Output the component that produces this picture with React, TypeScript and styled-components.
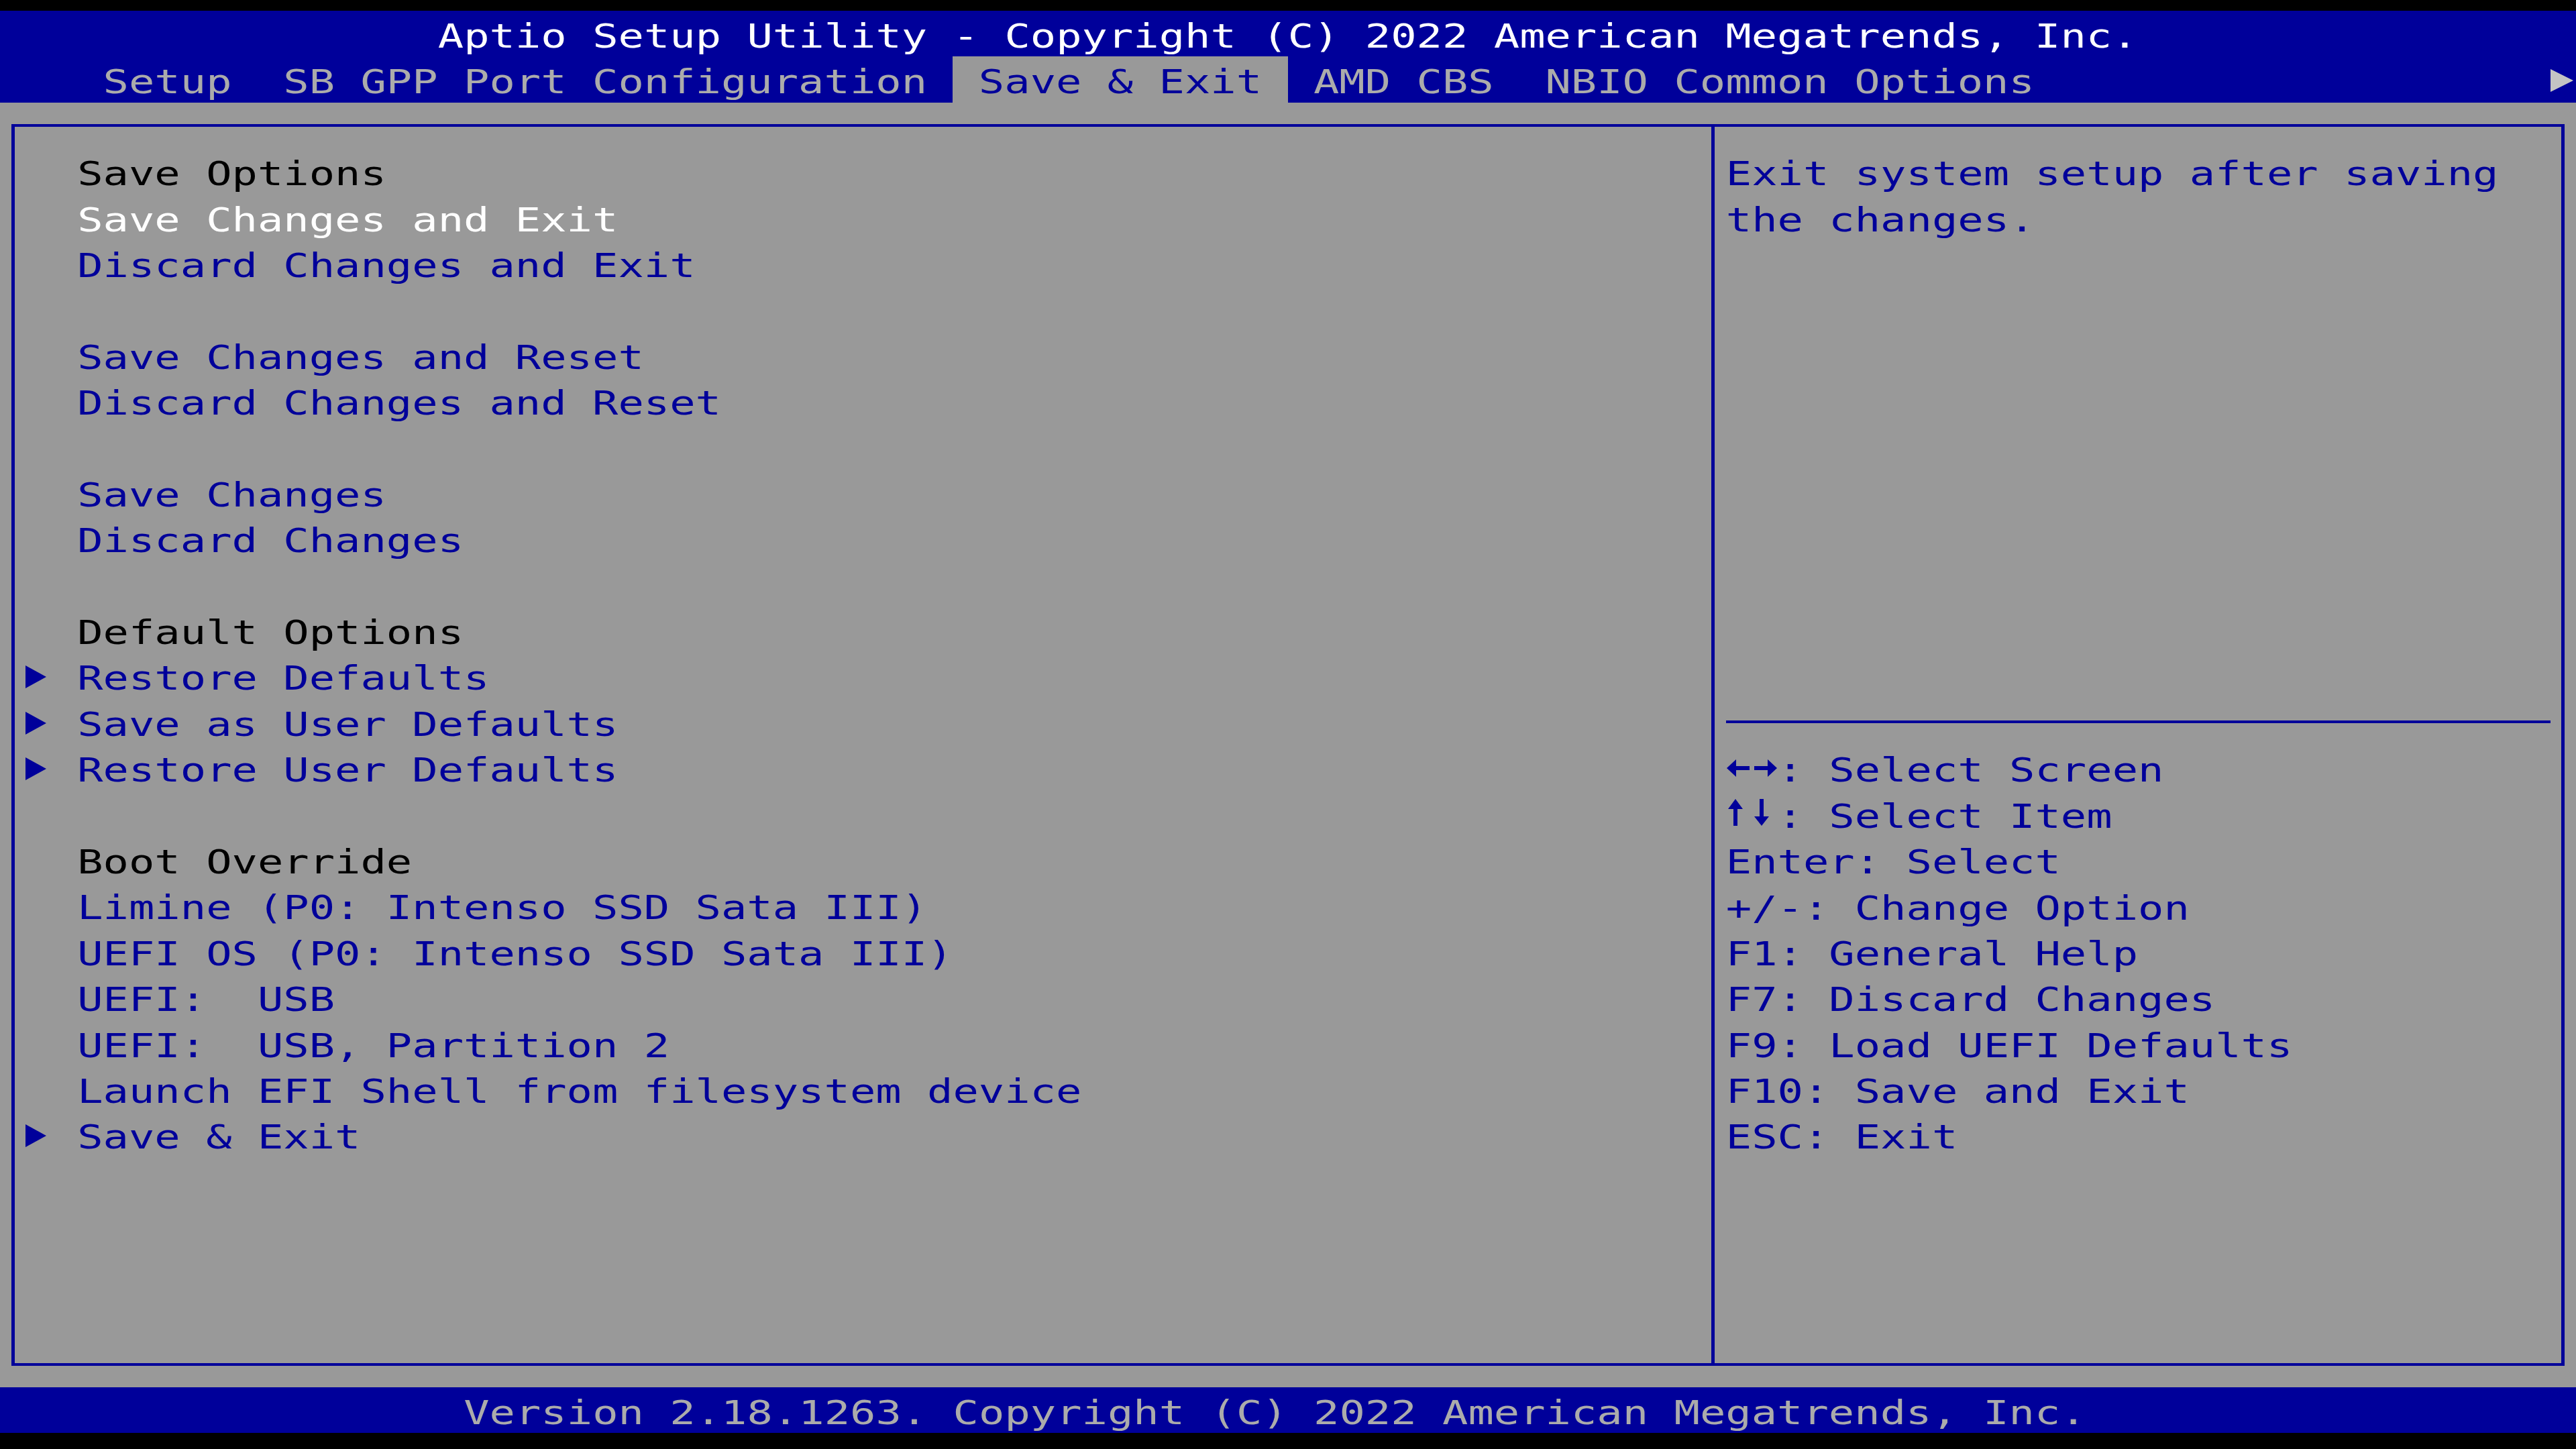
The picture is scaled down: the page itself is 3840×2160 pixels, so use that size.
import React from 'react';
import styled, { createGlobalStyle } from 'styled-components';

// Text-mode grid: 100 columns x 31 rows stretched over the screen
const COL = 38.4;
const ROW = 68.4;

const colors = {
  blue: '#00009a',
  gray: '#999999',
  dim: '#ababab',
  white: '#ffffff',
  black: '#000000',
  arrow: '#c4c4c4',
};

type Tone = keyof typeof colors;

const GlobalStyle = createGlobalStyle`
  html, body {
    margin: 0;
    padding: 0;
    background: #000;
  }
  body {
    font-family: "DejaVu Sans Mono", "Liberation Mono", monospace;
  }
`;

const Screen = styled.div`
  width: 3840px;
  height: 2160px;
  box-sizing: border-box;
  padding-top: 16px;
  background: #000;
  display: flex;
  flex-direction: column;
  overflow: hidden;
`;

const Text = styled.span<{ $tone?: Tone }>`
  display: inline-block;
  font-size: 63.78px;
  line-height: ${ROW}px;
  white-space: pre;
  color: ${p => colors[p.$tone ?? 'blue']};
  transform: translateY(4px) scaleY(0.78);
`;

const Bar = styled.div<{ $indent: number }>`
  flex: none;
  height: ${ROW}px;
  background: ${colors.blue};
  padding-left: ${p => p.$indent * COL}px;
  display: flex;
`;

const TabBar = styled.nav`
  flex: none;
  height: ${ROW}px;
  background: ${colors.blue};
  padding-left: ${3 * COL}px;
  display: flex;
`;

const Tab = styled.div<{ $active?: boolean }>`
  padding: 0 ${COL}px;
  background: ${p => (p.$active ? colors.gray : 'transparent')};
`;

const Spacer = styled.div`
  flex: 1;
`;

const Body = styled.main`
  flex: none;
  height: ${28 * ROW}px;
  box-sizing: border-box;
  padding: 32.2px 17px;
  background: ${colors.gray};
  display: flex;
`;

const Frame = styled.div`
  flex: 1;
  display: flex;
  border: 4px solid ${colors.blue};
  border-left-width: 5px;
  border-right-width: 5px;
`;

const MainPanel = styled.section`
  flex: none;
  width: 2534.1px;
  box-sizing: border-box;
  padding-top: 32.2px;
  border-right: 5px solid ${colors.blue};
`;

const HelpPanel = styled.aside`
  flex: 1;
  padding: 32.2px 0 0 16.7px;
`;

const MenuRow = styled.div`
  height: ${ROW}px;
  display: flex;
  padding-left: 16.4px;
`;

const Marker = styled.div`
  flex: none;
  width: ${2 * COL}px;
`;

const HelpRow = styled.div`
  height: ${ROW}px;
  display: flex;
`;

const Description = styled.div`
  height: ${12 * ROW}px;
`;

const Rule = styled.hr`
  margin: 32.2px 0;
  width: ${32 * COL}px;
  height: 4px;
  border: 0;
  background: ${colors.blue};
`;

const Glyph = styled.svg`
  flex: none;
  display: block;
`;

function SubmenuMark() {
  return (
    <Glyph width={COL} height={ROW} viewBox="0 0 38.4 68.4">
      <polygon points="0,19 31,36 0,53" fill={colors.blue} />
    </Glyph>
  );
}

function MoreTabs() {
  return (
    <Glyph width={COL} height={ROW} viewBox="0 0 38.4 68.4">
      <polygon points="0,19 34,36 0,53" fill={colors.arrow} />
    </Glyph>
  );
}

function ArrowPair({ dir }: { dir: 'h' | 'v' }) {
  return (
    <Glyph width={2 * COL} height={ROW} viewBox="0 0 76.8 68.4" fill={colors.blue}>
      {dir === 'h' ? (
        <>
          <polygon points="1,35 15,22 15,48" />
          <rect x="15" y="32" width="20" height="6" />
          <rect x="42" y="32" width="20" height="6" />
          <polygon points="62,22 76,35 62,48" />
        </>
      ) : (
        <>
          <polygon points="14,12 3,27 25,27" />
          <rect x="11" y="27" width="6" height="25" />
          <rect x="50" y="12" width="6" height="26" />
          <polygon points="42,38 64,38 53,52" />
        </>
      )}
    </Glyph>
  );
}

type Entry = { label?: string; kind?: 'heading' | 'active' | 'item'; submenu?: boolean };

const entries: Entry[] = [
  { label: 'Save Options', kind: 'heading' },
  { label: 'Save Changes and Exit', kind: 'active' },
  { label: 'Discard Changes and Exit' },
  {},
  { label: 'Save Changes and Reset' },
  { label: 'Discard Changes and Reset' },
  {},
  { label: 'Save Changes' },
  { label: 'Discard Changes' },
  {},
  { label: 'Default Options', kind: 'heading' },
  { label: 'Restore Defaults', submenu: true },
  { label: 'Save as User Defaults', submenu: true },
  { label: 'Restore User Defaults', submenu: true },
  {},
  { label: 'Boot Override', kind: 'heading' },
  { label: 'Limine (P0: Intenso SSD Sata III)' },
  { label: 'UEFI OS (P0: Intenso SSD Sata III)' },
  { label: 'UEFI:  USB' },
  { label: 'UEFI:  USB, Partition 2' },
  { label: 'Launch EFI Shell from filesystem device' },
  { label: 'Save & Exit', submenu: true },
];

const tabs = ['Setup', 'SB GPP Port Configuration', 'Save & Exit', 'AMD CBS', 'NBIO Common Options'];
const ACTIVE_TAB = 'Save & Exit';

const keyHints: { arrows?: 'h' | 'v'; text: string }[] = [
  { arrows: 'h', text: ': Select Screen' },
  { arrows: 'v', text: ': Select Item' },
  { text: 'Enter: Select' },
  { text: '+/-: Change Option' },
  { text: 'F1: General Help' },
  { text: 'F7: Discard Changes' },
  { text: 'F9: Load UEFI Defaults' },
  { text: 'F10: Save and Exit' },
  { text: 'ESC: Exit' },
];

function toneOf(e: Entry): Tone {
  if (e.kind === 'heading') return 'black';
  if (e.kind === 'active') return 'white';
  return 'blue';
}

export default function App() {
  return (
    <>
      <GlobalStyle />
      <Screen>
        <Bar $indent={17}>
          <Text $tone="white">Aptio Setup Utility - Copyright (C) 2022 American Megatrends, Inc.</Text>
        </Bar>
        <TabBar>
          {tabs.map(t => (
            <Tab key={t} $active={t === ACTIVE_TAB}>
              <Text $tone={t === ACTIVE_TAB ? 'blue' : 'dim'}>{t}</Text>
            </Tab>
          ))}
          <Spacer />
          <MoreTabs />
        </TabBar>
        <Body>
          <Frame>
            <MainPanel>
              {entries.map((e, i) => (
                <MenuRow key={i}>
                  <Marker>{e.submenu && <SubmenuMark />}</Marker>
                  {e.label && <Text $tone={toneOf(e)}>{e.label}</Text>}
                </MenuRow>
              ))}
            </MainPanel>
            <HelpPanel>
              <Description>
                <HelpRow>
                  <Text>Exit system setup after saving</Text>
                </HelpRow>
                <HelpRow>
                  <Text>the changes.</Text>
                </HelpRow>
              </Description>
              <Rule />
              {keyHints.map(k => (
                <HelpRow key={k.text}>
                  {k.arrows && <ArrowPair dir={k.arrows} />}
                  <Text>{k.text}</Text>
                </HelpRow>
              ))}
            </HelpPanel>
          </Frame>
        </Body>
        <Bar $indent={18}>
          <Text $tone="dim">Version 2.18.1263. Copyright (C) 2022 American Megatrends, Inc.</Text>
        </Bar>
      </Screen>
    </>
  );
}
